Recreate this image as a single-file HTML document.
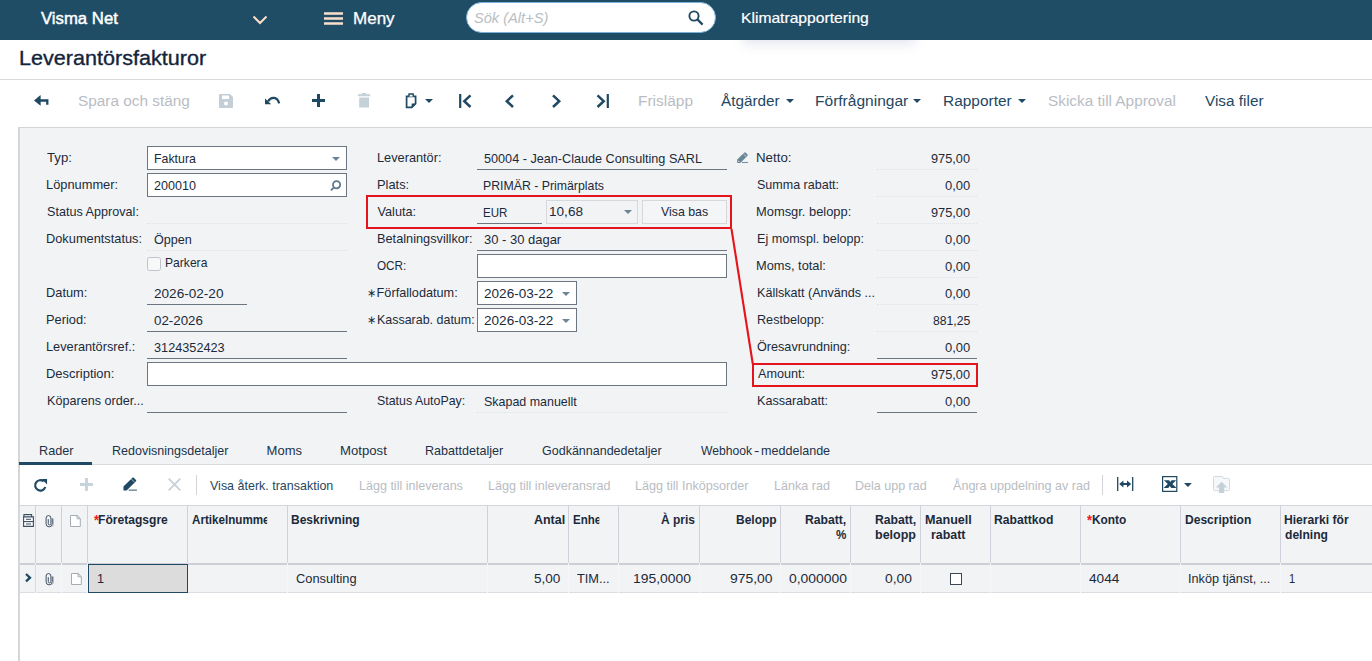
<!DOCTYPE html>
<html lang="sv"><head><meta charset="utf-8"><title>Leverantörsfakturor</title>
<style>
*{box-sizing:border-box;margin:0;padding:0}
html,body{width:1372px;height:661px;overflow:hidden;background:#fff}
body{font-family:"Liberation Sans",sans-serif;color:#1b2a3a;position:relative}
.x{position:absolute;white-space:nowrap;transform-origin:0 50%}
.a{position:absolute}
.inp{position:absolute;background:#fff;border:1px solid #6c7683}
.ul{position:absolute;height:1px;background:#6c7683}
.dl{position:absolute;height:0;border-top:1px dotted #e0e2e6}
.cb{position:absolute;top:506px;width:1px;height:57px;background:#cfd0da}
.rb{position:absolute;top:563px;width:1px;height:30px;background:#f6f7f9}
svg{position:absolute;overflow:visible}

</style></head><body>
<div class="a" style="left:745px;top:12px;width:168px;height:27px;box-shadow:0 3px 12px 2px rgba(70,90,150,.15)"></div>
<div class="a" style="left:0;top:0;width:1372px;height:40px;background:#204d66"></div>

<svg style="left:252px;top:15px" width="16" height="10" viewBox="0 0 16 10"><path d="M1.5 1.5 L8 8 L14.5 1.5" fill="none" stroke="#fadfcd" stroke-width="2"/></svg>
<svg style="left:324px;top:12px" width="19" height="13" viewBox="0 0 19 13"><path d="M0 1.5H19M0 6.5H19M0 11.5H19" stroke="#fadfcd" stroke-width="2.6"/></svg>
<div class="a" style="left:466px;top:2px;width:249.5px;height:30.5px;border-radius:16px;background:#fff;border:1px solid #7db0d8"></div>
<svg style="left:687px;top:9px" width="18" height="18" viewBox="0 0 18 18"><circle cx="7" cy="7" r="4.6" fill="none" stroke="#1f4a63" stroke-width="1.9"/><path d="M10.4 10.4 L15.6 15.6" stroke="#1f4a63" stroke-width="2.2"/></svg>
<div class="a" style="left:0;top:79px;width:1372px;height:1px;background:#d7d9dc"></div>
<!-- panel -->
<div class="a" style="left:18px;top:127px;width:1354px;height:534px;background:#f2f3f5;border-top:1px solid #d2d4d8"></div>
<div class="a" style="left:18px;top:127px;width:1px;height:534px;background:#d3d5d9"></div><div class="a" style="left:19px;top:128px;width:1px;height:533px;background:#d6d8dc"></div>
<!-- toolbar icons -->
<svg style="left:33.8px;top:95px" width="15" height="11" viewBox="0 0 15 11"><path d="M0 5.4 L6.6 0 V10.8 Z" fill="#1f4862"/><path d="M5.5 5.5 H13.3 V9.8" fill="none" stroke="#1f4862" stroke-width="2.3"/></svg>
<svg style="left:219px;top:94px" width="14" height="14" viewBox="0 0 14 14"><path d="M0 1 a1 1 0 0 1 1-1 H11 L14 3 V13 a1 1 0 0 1 -1 1 H1 a1 1 0 0 1 -1-1 Z" fill="#c3ced6"/><rect x="3" y="1.5" width="7" height="3.5" fill="#fff"/><circle cx="7" cy="9.5" r="2" fill="#fff"/></svg>
<svg style="left:265px;top:96px" width="16" height="9" viewBox="0 0 16 9"><path d="M0 2.4 V8.2 H6.2 Z" fill="#1f4862"/><path d="M3 5.4 C6 0.6 12.2 0.2 14.2 7.4" fill="none" stroke="#1f4862" stroke-width="2.2"/></svg>
<svg style="left:312px;top:94px" width="13" height="13" viewBox="0 0 13 13"><path d="M6.5 0V13M0 6.5H13" stroke="#1f4862" stroke-width="3"/></svg>
<svg style="left:358px;top:93px" width="12.2" height="15" viewBox="0 0 12.2 15"><path d="M3.8 0H8.4V1.3H12.2V3.2H0V1.3H3.8Z M1.2 4.5H11V14a0.6 0.6 0 0 1-.6.6H1.8A0.6 0.6 0 0 1 1.2 14Z" fill="#c5d1d9"/></svg>
<svg style="left:404.5px;top:92.6px" width="12" height="16" viewBox="0 0 12 16"><path d="M1.6 3.4 H10.6 V10.6 L6.8 14.4 H1.6 Z" fill="#fff" stroke="#1f4862" stroke-width="1.7"/><path d="M4 3.6 V1 H8.2 V3.6" fill="#fff" stroke="#1f4862" stroke-width="1.4"/><path d="M6.6 15 V10.4 H11.2 Z" fill="#1f4862"/></svg>
<svg style="left:425px;top:99px" width="8" height="4" viewBox="0 0 8 4"><path d="M0 0H8L4 4Z" fill="#1f4862"/></svg>
<svg style="left:459px;top:94px" width="13" height="14" viewBox="0 0 13 14"><path d="M1.2 0V14" stroke="#1f4862" stroke-width="2.2"/><path d="M11.5 1.4 L5.3 7.2 L11.5 13" fill="none" stroke="#1f4862" stroke-width="2.5"/></svg>
<svg style="left:504px;top:94px" width="11" height="14" viewBox="0 0 11 14"><path d="M9 1.4 L2.8 7.2 L9 13" fill="none" stroke="#1f4862" stroke-width="2.5"/></svg>
<svg style="left:551px;top:94px" width="11" height="14" viewBox="0 0 11 14"><path d="M2 1.4 L8.2 7.2 L2 13" fill="none" stroke="#1f4862" stroke-width="2.5"/></svg>
<svg style="left:596px;top:94px" width="13" height="14" viewBox="0 0 13 14"><path d="M11.8 0V14" stroke="#1f4862" stroke-width="2.2"/><path d="M1.5 1.4 L7.7 7.2 L1.5 13" fill="none" stroke="#1f4862" stroke-width="2.5"/></svg>
<svg style="left:786px;top:99px" width="8" height="4" viewBox="0 0 8 4"><path d="M0 0H8L4 4Z" fill="#1f4862"/></svg>
<svg style="left:913px;top:99px" width="8" height="4" viewBox="0 0 8 4"><path d="M0 0H8L4 4Z" fill="#1f4862"/></svg>
<svg style="left:1017.5px;top:99px" width="8" height="4" viewBox="0 0 8 4"><path d="M0 0H8L4 4Z" fill="#1f4862"/></svg>
<!-- form left -->
<div class="inp" style="left:147px;top:146px;width:200px;height:24px"></div>
<svg style="left:331.6px;top:157px" width="8" height="4" viewBox="0 0 8 4"><path d="M0 0H8L4 4Z" fill="#6b8597"/></svg>
<div class="inp" style="left:147px;top:173px;width:200px;height:24px"></div>
<svg style="left:330px;top:180px" width="12" height="12" viewBox="0 0 12 12"><circle cx="6.6" cy="4.7" r="3.6" fill="none" stroke="#5f7a8c" stroke-width="1.8"/><path d="M3.9 7.4 L0.9 10.4" stroke="#5f7a8c" stroke-width="1.9"/></svg>
<div class="dl" style="left:147px;top:223px;width:200px"></div>
<div class="dl" style="left:147px;top:250px;width:200px"></div>
<div class="a" style="left:147px;top:257px;width:14px;height:14px;background:#f8f8f9;border:1px solid #bfc3c9;border-radius:2.5px"></div>
<div class="ul" style="left:147px;top:304px;width:99.5px"></div>
<div class="ul" style="left:147px;top:331px;width:199.5px"></div>
<div class="ul" style="left:147px;top:358px;width:199.5px"></div>
<div class="inp" style="left:147px;top:362px;width:580px;height:24px"></div>
<div class="ul" style="left:147px;top:412px;width:199.5px"></div>
<!-- form middle -->
<div class="ul" style="left:477px;top:169px;width:250px"></div>
<svg style="left:736.9px;top:152px" width="11.3" height="11" viewBox="0 0 12.9 13"><path d="M0 13 V9 L8.2 0.8 Q9.2 -0.2 10.2 0.8 L12 2.6 Q13 3.6 12 4.6 L3.6 13 Z" fill="#6a8797"/><path d="M7.4 2.2 L10.6 5.4" stroke="#f2f3f5" stroke-width="0.8"/><path d="M1.3 10 V11.7 H3 Z" fill="#f2f3f5"/><path d="M5.6 12.4 H12.9" stroke="#6a8797" stroke-width="1.1"/></svg>
<div class="ul" style="left:477px;top:223px;width:64.5px"></div>
<div class="a" style="left:546px;top:200px;width:91.5px;height:24px;border:1px solid #d6d8dc;background:#f2f3f5"></div>
<svg style="left:623.5px;top:210px" width="8" height="4" viewBox="0 0 8 4"><path d="M0 0H8L4 4Z" fill="#6b8597"/></svg>
<div class="a" style="left:642px;top:200px;width:85px;height:24px;border:1px solid #d6d8dc;background:#f4f5f6"></div>
<div class="ul" style="left:477px;top:250px;width:250px"></div>
<div class="inp" style="left:477px;top:254px;width:250px;height:24px"></div>
<div class="inp" style="left:477px;top:281px;width:100px;height:24px"></div>
<svg style="left:562px;top:292px" width="8" height="4" viewBox="0 0 8 4"><path d="M0 0H8L4 4Z" fill="#6b8597"/></svg>
<div class="inp" style="left:477px;top:308px;width:100px;height:24px"></div>
<svg style="left:562px;top:319px" width="8" height="4" viewBox="0 0 8 4"><path d="M0 0H8L4 4Z" fill="#6b8597"/></svg>
<div class="dl" style="left:477px;top:412px;width:250px"></div>
<!-- form right -->
<div class="dl" style="left:877px;top:169px;width:100px"></div>
<div class="dl" style="left:877px;top:196px;width:100px"></div>
<div class="dl" style="left:877px;top:223px;width:100px"></div>
<div class="dl" style="left:877px;top:250px;width:100px"></div>
<div class="dl" style="left:877px;top:277px;width:100px"></div>
<div class="dl" style="left:877px;top:304px;width:100px"></div>
<div class="dl" style="left:877px;top:331px;width:100px"></div>
<div class="ul" style="left:877px;top:358px;width:100px"></div>
<div class="ul" style="left:877px;top:412px;width:100px"></div>
<!-- red annotation -->
<div class="a" style="left:366px;top:195px;width:365.6px;height:34.3px;border:2px solid #e5131b"></div>
<div class="a" style="left:752px;top:363px;width:226px;height:23.5px;border:2px solid #e5131b"></div>
<svg style="left:0;top:0" width="1372" height="661" viewBox="0 0 1372 661"><path d="M731.5 229 L752.8 364" stroke="#e5131b" stroke-width="2.1" fill="none"/></svg>
<!-- tabs -->
<div class="a" style="left:19px;top:464px;width:1353px;height:1px;background:#d9dbde"></div>
<div class="a" style="left:19px;top:462px;width:73px;height:3px;background:#1f4a63"></div>
<!-- grid toolbar -->
<div class="a" style="left:19.5px;top:465px;width:1353px;height:41px;background:#fff"></div>
<svg style="left:34.2px;top:479.2px" width="13.2" height="12.6" viewBox="0 0 13.2 12.6"><path d="M11.3 8 A5.2 5.2 0 1 1 9.7 2.4" fill="none" stroke="#1f4862" stroke-width="2.2"/><path d="M7.7 0 H13.1 V5.4 Z" fill="#1f4862"/></svg>
<svg style="left:80px;top:478px" width="13" height="13" viewBox="0 0 13 13"><path d="M6.5 0V13M0 6.5H13" stroke="#c7d3da" stroke-width="2.8"/></svg>
<svg style="left:122.8px;top:477.4px" width="14.4" height="13.6" viewBox="0 0 12.9 13"><path d="M0 13 V9.2 L8.6 0.6 Q9.2 0 9.8 0.6 L12 2.8 Q12.6 3.4 12 4 L3 13 Z" fill="#1f4862"/><path d="M7.6 2 L10.6 5" stroke="#fff" stroke-width="0.6"/><path d="M5 12.55 H12.9" stroke="#1f4862" stroke-width="0.9"/></svg>
<svg style="left:168px;top:478.2px" width="13" height="13" viewBox="0 0 13 13"><path d="M0.7 0.7L12.3 12.3M12.3 0.7L0.7 12.3" stroke="#c7d3da" stroke-width="1.9"/></svg>
<div class="a" style="left:196px;top:475px;width:1px;height:20px;background:#d3d5d9"></div>
<div class="a" style="left:1102px;top:475px;width:1px;height:20px;background:#d3d5d9"></div>
<svg style="left:1116.8px;top:477px" width="16.4" height="14" viewBox="0 0 16.4 14"><path d="M0.7 0V14M15.7 0V14" stroke="#1f4862" stroke-width="1.3"/><path d="M5 7H11.4" stroke="#1f4862" stroke-width="2"/><path d="M2.2 7 L6.4 3.6 V10.4Z M14.2 7 L10 3.6 V10.4Z" fill="#1f4862"/></svg>
<svg style="left:1161.9px;top:475.9px" width="15.4" height="16" viewBox="0 0 15.4 16"><rect x="0.6" y="0.6" width="14.2" height="14.8" fill="#fff" stroke="#1f4862" stroke-width="1.2"/><path d="M2 4.2H7.2L8.2 5.9 L9.6 4.2H14.2 L10.4 8 L14.6 12H9.2L7.9 10.1 L6.2 12H1.6L5.8 8Z" fill="#1f4862"/></svg>
<svg style="left:1183.6px;top:483.1px" width="7.8" height="4" viewBox="0 0 8 4"><path d="M0 0H8L4 4Z" fill="#1f4862"/></svg>
<svg style="left:1213px;top:476px" width="17" height="17.2" viewBox="0 0 17 17.2"><path d="M0.5 13.6V1.6a1.1 1.1 0 0 1 1.1-1.1H9.2a1.1 1.1 0 0 1 1.1 1.1V2.4H15.4a1.1 1.1 0 0 1 1.1 1.1V13.6a1.1 1.1 0 0 1 -1.1 1.1H1.6a1.1 1.1 0 0 1 -1.1-1.1Z" fill="#f5f7f8" stroke="#d2dae0" stroke-width="1"/><path d="M8.6 5.8 L14.3 11.6 H11.2 V17 H6 V11.6 H2.9 Z" fill="#c5d1d9"/></svg>
<!-- grid -->
<div class="a" style="left:19.5px;top:505px;width:1353px;height:1px;background:#d5d6dc"></div>
<div class="a" style="left:19.5px;top:563px;width:1353px;height:2px;background:#cdced8"></div>
<div class="a" style="left:19.5px;top:592px;width:1353px;height:69px;background:#fff;border-top:1px solid #dcdde2"></div>
<div class="cb" style="left:35px"></div><div class="cb" style="left:61px"></div><div class="cb" style="left:87px"></div><div class="cb" style="left:187px"></div><div class="cb" style="left:287px"></div><div class="cb" style="left:487px"></div><div class="cb" style="left:568px"></div><div class="cb" style="left:618px"></div><div class="cb" style="left:699px"></div><div class="cb" style="left:780px"></div><div class="cb" style="left:850px"></div><div class="cb" style="left:920px"></div><div class="cb" style="left:990px"></div><div class="cb" style="left:1080px"></div><div class="cb" style="left:1180px"></div><div class="cb" style="left:1280px"></div>
<div class="rb" style="left:35px"></div><div class="rb" style="left:61px"></div><div class="rb" style="left:87px"></div><div class="rb" style="left:187px"></div><div class="rb" style="left:287px"></div><div class="rb" style="left:487px"></div><div class="rb" style="left:568px"></div><div class="rb" style="left:618px"></div><div class="rb" style="left:699px"></div><div class="rb" style="left:780px"></div><div class="rb" style="left:850px"></div><div class="rb" style="left:920px"></div><div class="rb" style="left:990px"></div><div class="rb" style="left:1080px"></div><div class="rb" style="left:1180px"></div><div class="rb" style="left:1280px"></div>
<div class="a" style="left:35px;top:565px;width:1px;height:27px;background:#d9dbe0"></div>
<div class="a" style="left:88px;top:564px;width:100px;height:29px;background:#dcdcdc;border:1px solid #1f4a63"></div>
<!-- grid icons -->
<svg style="left:22.9px;top:513.9px" width="11" height="13" viewBox="0 0 11 13"><path d="M0.9 2.9 V0.6 H8.6 V2.9" fill="#fff" stroke="#3b4f63" stroke-width="1.1"/><path d="M0.6 2.9H10.4V12.4H0.6Z" fill="#fff" stroke="#3b4f63" stroke-width="1.1"/><path d="M0.6 7.6H10.4" stroke="#3b4f63" stroke-width="1.1"/><path d="M3 5.3H8M3 10H8" stroke="#3b4f63" stroke-width="1"/></svg>
<svg style="left:44.5px;top:514.7px" width="9.4" height="12.4" viewBox="0 0 9.4 12.4"><path d="M7.3 3.4 V8.8 a3.1 3.1 0 0 1 -6.2 0 V3 a2.4 2.4 0 0 1 4.8 0 V8.6 a1.3 1.3 0 0 1 -2.6 0 V4.2" fill="none" stroke="#35485c" stroke-width="0.95"/><path d="M8.4 3.6 V8.9 a4.1 4.1 0 0 1 -1 2.6" fill="none" stroke="#9aa5b0" stroke-width="0.8"/></svg>
<svg style="left:70.2px;top:514.8px" width="10.8" height="12" viewBox="0 0 10.8 12"><path d="M0.5 0.5H7L10.3 3.8V11.5H0.5Z" fill="#fff" stroke="#a4abb4" stroke-width="1"/><path d="M7 0.5V3.8H10.3Z" fill="#eceef0" stroke="#a4abb4" stroke-width="0.9"/></svg>
<svg style="left:24.6px;top:572.8px" width="7" height="9.4" viewBox="0 0 7 9.4"><path d="M1 1 L5 4.7 L1 8.4" fill="none" stroke="#1f4862" stroke-width="2.3"/></svg>
<svg style="left:45.4px;top:572.9px" width="9.4" height="12.4" viewBox="0 0 9.4 12.4"><path d="M7.3 3.4 V8.8 a3.1 3.1 0 0 1 -6.2 0 V3 a2.4 2.4 0 0 1 4.8 0 V8.6 a1.3 1.3 0 0 1 -2.6 0 V4.2" fill="none" stroke="#35485c" stroke-width="0.95"/><path d="M8.4 3.6 V8.9 a4.1 4.1 0 0 1 -1 2.6" fill="none" stroke="#9aa5b0" stroke-width="0.8"/></svg>
<svg style="left:71px;top:573px" width="10.8" height="12" viewBox="0 0 10.8 12"><path d="M0.5 0.5H7L10.3 3.8V11.5H0.5Z" fill="#fff" stroke="#a4abb4" stroke-width="1"/><path d="M7 0.5V3.8H10.3Z" fill="#eceef0" stroke="#a4abb4" stroke-width="0.9"/></svg>
<div class="a" style="left:950px;top:573px;width:12px;height:12px;background:#fff;border:1px solid #3d4754"></div>

<!-- text -->
<div class="x" style="left:40.50px;top:10px;font-size:16.3px;line-height:16.3px;color:#fff;transform:scaleX(1.0275);-webkit-text-stroke:0.45px #fff">Visma Net</div>
<div class="x" style="left:353.47px;top:11px;font-size:15.6px;line-height:15.6px;color:#fff;transform:scaleX(1.0913);-webkit-text-stroke:0.25px #fff">Meny</div>
<div class="x" style="left:473.77px;top:11px;font-size:14.0px;line-height:14.0px;color:#b9bec4;transform:scaleX(1.0435);font-style:italic">Sök (Alt+S)</div>
<div class="x" style="left:741.28px;top:10px;font-size:15.0px;line-height:15.0px;color:#fff;transform:scaleX(1.0428);-webkit-text-stroke:0.2px #fff">Klimatrapportering</div>
<div class="x" style="left:18.81px;top:48px;font-size:20.8px;line-height:20.8px;color:#13243a;transform:scaleX(1.0374);-webkit-text-stroke:0.35px #13243a">Leverantörsfakturor</div>
<div class="x" style="left:77.52px;top:93px;font-size:15.3px;line-height:15.3px;color:#b9bdc3;transform:scaleX(1.0037)">Spara och stäng</div>
<div class="x" style="left:638.09px;top:93px;font-size:15.3px;line-height:15.3px;color:#b9bdc3;transform:scaleX(1.0114)">Frisläpp</div>
<div class="x" style="left:721.00px;top:93px;font-size:15.3px;line-height:15.3px;color:#1f4761">Åtgärder</div>
<div class="x" style="left:814.79px;top:93px;font-size:15.3px;line-height:15.3px;color:#1f4761;transform:scaleX(1.0157)">Förfrågningar</div>
<div class="x" style="left:942.99px;top:93px;font-size:15.3px;line-height:15.3px;color:#1f4761;transform:scaleX(1.0110)">Rapporter</div>
<div class="x" style="left:1047.82px;top:93px;font-size:15.3px;line-height:15.3px;color:#b9bdc3;transform:scaleX(1.0031)">Skicka till Approval</div>
<div class="x" style="left:1204.50px;top:93px;font-size:15.3px;line-height:15.3px;color:#1f4761;transform:scaleX(1.0031)">Visa filer</div>
<div class="x" style="left:47.24px;top:152px;font-size:12.7px;line-height:12.7px;color:#1b2a3a;transform:scaleX(1.0389)">Typ:</div>
<div class="x" style="left:46.49px;top:179px;font-size:12.7px;line-height:12.7px;color:#1b2a3a;transform:scaleX(1.0121)">Löpnummer:</div>
<div class="x" style="left:46.95px;top:206px;font-size:12.7px;line-height:12.7px;color:#1b2a3a;transform:scaleX(0.9945)">Status Approval:</div>
<div class="x" style="left:46.49px;top:233px;font-size:12.7px;line-height:12.7px;color:#1b2a3a;transform:scaleX(1.0090)">Dokumentstatus:</div>
<div class="x" style="left:46.49px;top:287px;font-size:12.7px;line-height:12.7px;color:#1b2a3a;transform:scaleX(1.0115)">Datum:</div>
<div class="x" style="left:46.49px;top:314px;font-size:12.7px;line-height:12.7px;color:#1b2a3a;transform:scaleX(1.0102)">Period:</div>
<div class="x" style="left:46.49px;top:341px;font-size:12.7px;line-height:12.7px;color:#1b2a3a;transform:scaleX(1.0050)">Leverantörsref.:</div>
<div class="x" style="left:46.48px;top:368px;font-size:12.7px;line-height:12.7px;color:#1b2a3a;transform:scaleX(1.0204)">Description:</div>
<div class="x" style="left:46.51px;top:395px;font-size:12.7px;line-height:12.7px;color:#1b2a3a;transform:scaleX(0.9942)">Köparens order...</div>
<div class="x" style="left:153.53px;top:152px;font-size:13.0px;line-height:13.0px;color:#1b2a3a;transform:scaleX(0.9504)">Faktura</div>
<div class="x" style="left:153.91px;top:179px;font-size:13.0px;line-height:13.0px;color:#1b2a3a;transform:scaleX(0.9659)">200010</div>
<div class="x" style="left:153.91px;top:233px;font-size:13.0px;line-height:13.0px;color:#1b2a3a;transform:scaleX(0.9684)">Öppen</div>
<div class="x" style="left:164.55px;top:256px;font-size:13.0px;line-height:13.0px;color:#1b2a3a;transform:scaleX(0.9308)">Parkera</div>
<div class="x" style="left:153.86px;top:287px;font-size:13.0px;line-height:13.0px;color:#1b2a3a;transform:scaleX(1.0448)">2026-02-20</div>
<div class="x" style="left:154.08px;top:314px;font-size:13.0px;line-height:13.0px;color:#1b2a3a;transform:scaleX(1.0262)">02-2026</div>
<div class="x" style="left:154.10px;top:341px;font-size:13.0px;line-height:13.0px;color:#1b2a3a;transform:scaleX(0.9773)">3124352423</div>
<div class="x" style="left:376.60px;top:152px;font-size:12.7px;line-height:12.7px;color:#1b2a3a;transform:scaleX(1.0046)">Leverantör:</div>
<div class="x" style="left:376.59px;top:179px;font-size:12.7px;line-height:12.7px;color:#1b2a3a;transform:scaleX(1.0124)">Plats:</div>
<div class="x" style="left:377.55px;top:206px;font-size:12.7px;line-height:12.7px;color:#1b2a3a">Valuta:</div>
<div class="x" style="left:376.60px;top:233px;font-size:12.7px;line-height:12.7px;color:#1b2a3a;transform:scaleX(1.0047)">Betalningsvillkor:</div>
<div class="x" style="left:377.05px;top:260px;font-size:12.7px;line-height:12.7px;color:#1b2a3a;transform:scaleX(0.9227)">OCR:</div>
<div class="x" style="left:376.60px;top:287px;font-size:12.7px;line-height:12.7px;color:#1b2a3a">Förfallodatum:</div>
<div class="x" style="left:376.62px;top:314px;font-size:12.7px;line-height:12.7px;color:#1b2a3a;transform:scaleX(0.9815)">Kassarab. datum:</div>
<div class="x" style="left:377.06px;top:395px;font-size:12.7px;line-height:12.7px;color:#1b2a3a;transform:scaleX(0.9777)">Status AutoPay:</div>
<div class="x" style="left:483.90px;top:152px;font-size:13.0px;line-height:13.0px;color:#1b2a3a;transform:scaleX(0.9727)">50004 - Jean-Claude Consulting SARL</div>
<div class="x" style="left:483.34px;top:179px;font-size:13.0px;line-height:13.0px;color:#1b2a3a;transform:scaleX(0.9460)">PRIMÄR - Primärplats</div>
<div class="x" style="left:483.40px;top:206px;font-size:13.0px;line-height:13.0px;color:#1b2a3a;transform:scaleX(0.8891)">EUR</div>
<div class="x" style="left:549.15px;top:205px;font-size:13.0px;line-height:13.0px;color:#1b2a3a;transform:scaleX(1.0451)">10,68</div>
<div class="x" style="left:661.30px;top:205px;font-size:13.0px;line-height:13.0px;color:#1b2a3a;transform:scaleX(0.9488)">Visa bas</div>
<div class="x" style="left:483.89px;top:233px;font-size:13.0px;line-height:13.0px;color:#1b2a3a;transform:scaleX(0.9979)">30 - 30 dagar</div>
<div class="x" style="left:483.66px;top:287px;font-size:13.0px;line-height:13.0px;color:#1b2a3a;transform:scaleX(1.0434)">2026-03-22</div>
<div class="x" style="left:483.66px;top:314px;font-size:13.0px;line-height:13.0px;color:#1b2a3a;transform:scaleX(1.0434)">2026-03-22</div>
<div class="x" style="left:483.91px;top:395px;font-size:13.0px;line-height:13.0px;color:#1b2a3a;transform:scaleX(0.9577)">Skapad manuellt</div>
<div class="x" style="left:367.32px;top:287px;font-size:12px;line-height:12px;color:#1b2a3a;transform:scaleX(0.9220)">∗</div>
<div class="x" style="left:367.32px;top:314px;font-size:12px;line-height:12px;color:#1b2a3a;transform:scaleX(0.9220)">∗</div>
<div class="x" style="left:756.45px;top:152px;font-size:12.7px;line-height:12.7px;color:#1b2a3a;transform:scaleX(1.0487)">Netto:</div>
<div class="x" style="left:756.96px;top:179px;font-size:12.7px;line-height:12.7px;color:#1b2a3a;transform:scaleX(0.9864)">Summa rabatt:</div>
<div class="x" style="left:756.48px;top:206px;font-size:12.7px;line-height:12.7px;color:#1b2a3a;transform:scaleX(1.0157)">Momsgr. belopp:</div>
<div class="x" style="left:756.51px;top:233px;font-size:12.7px;line-height:12.7px;color:#1b2a3a;transform:scaleX(0.9908)">Ej momspl. belopp:</div>
<div class="x" style="left:756.49px;top:260px;font-size:12.7px;line-height:12.7px;color:#1b2a3a;transform:scaleX(1.0114)">Moms, total:</div>
<div class="x" style="left:756.51px;top:287px;font-size:12.7px;line-height:12.7px;color:#1b2a3a;transform:scaleX(0.9909)">Källskatt (Används ...</div>
<div class="x" style="left:756.51px;top:314px;font-size:12.7px;line-height:12.7px;color:#1b2a3a;transform:scaleX(0.9947)">Restbelopp:</div>
<div class="x" style="left:756.90px;top:341px;font-size:12.7px;line-height:12.7px;color:#1b2a3a;transform:scaleX(0.9950)">Öresavrundning:</div>
<div class="x" style="left:757.50px;top:368px;font-size:12.7px;line-height:12.7px;color:#1b2a3a;transform:scaleX(0.9964)">Amount:</div>
<div class="x" style="left:756.50px;top:395px;font-size:12.7px;line-height:12.7px;color:#1b2a3a;transform:scaleX(0.9961)">Kassarabatt:</div>
<div class="x" style="left:931.00px;top:152px;font-size:13.0px;line-height:13.0px;color:#1b2a3a;transform:scaleX(0.9812)">975,00</div>
<div class="x" style="left:944.79px;top:179px;font-size:13.0px;line-height:13.0px;color:#1b2a3a;transform:scaleX(0.9971)">0,00</div>
<div class="x" style="left:931.00px;top:206px;font-size:13.0px;line-height:13.0px;color:#1b2a3a;transform:scaleX(0.9812)">975,00</div>
<div class="x" style="left:944.79px;top:233px;font-size:13.0px;line-height:13.0px;color:#1b2a3a;transform:scaleX(0.9971)">0,00</div>
<div class="x" style="left:944.79px;top:260px;font-size:13.0px;line-height:13.0px;color:#1b2a3a;transform:scaleX(0.9971)">0,00</div>
<div class="x" style="left:944.79px;top:287px;font-size:13.0px;line-height:13.0px;color:#1b2a3a;transform:scaleX(0.9971)">0,00</div>
<div class="x" style="left:932.92px;top:314px;font-size:13.0px;line-height:13.0px;color:#1b2a3a;transform:scaleX(0.9375)">881,25</div>
<div class="x" style="left:944.79px;top:341px;font-size:13.0px;line-height:13.0px;color:#1b2a3a;transform:scaleX(0.9971)">0,00</div>
<div class="x" style="left:931.00px;top:368px;font-size:13.0px;line-height:13.0px;color:#1b2a3a;transform:scaleX(0.9812)">975,00</div>
<div class="x" style="left:944.79px;top:395px;font-size:13.0px;line-height:13.0px;color:#1b2a3a;transform:scaleX(0.9971)">0,00</div>
<div class="x" style="left:39.01px;top:444px;font-size:13.0px;line-height:13.0px;color:#1c3247;transform:scaleX(0.9759)">Rader</div>
<div class="x" style="left:111.62px;top:444px;font-size:13.0px;line-height:13.0px;color:#1c3247;transform:scaleX(0.9640)">Redovisningsdetaljer</div>
<div class="x" style="left:266.59px;top:444px;font-size:13.0px;line-height:13.0px;color:#1c3247">Moms</div>
<div class="x" style="left:339.87px;top:444px;font-size:13.0px;line-height:13.0px;color:#1c3247;transform:scaleX(1.0117)">Motpost</div>
<div class="x" style="left:424.82px;top:444px;font-size:13.0px;line-height:13.0px;color:#1c3247;transform:scaleX(0.9654)">Rabattdetaljer</div>
<div class="x" style="left:541.71px;top:444px;font-size:13.0px;line-height:13.0px;color:#1c3247;transform:scaleX(0.9616)">Godkännandedetaljer</div>
<div class="x" style="left:700.70px;top:444px;font-size:13.0px;line-height:13.0px;color:#1c3247;transform:scaleX(0.9346)">Webhook</div>
<div class="x" style="left:754.39px;top:444px;font-size:13.0px;line-height:13.0px;color:#1c3247;transform:scaleX(1.2452)">-</div>
<div class="x" style="left:761.22px;top:444px;font-size:13.0px;line-height:13.0px;color:#1c3247;transform:scaleX(0.9656)">meddelande</div>
<div class="x" style="left:210.40px;top:479px;font-size:13.0px;line-height:13.0px;color:#1f4761;transform:scaleX(0.9604)">Visa återk. transaktion</div>
<div class="x" style="left:359.32px;top:479px;font-size:13.0px;line-height:13.0px;color:#b9bdc3;transform:scaleX(0.9647)">Lägg till inleverans</div>
<div class="x" style="left:488.02px;top:479px;font-size:13.0px;line-height:13.0px;color:#b9bdc3;transform:scaleX(0.9678)">Lägg till inleveransrad</div>
<div class="x" style="left:635.42px;top:479px;font-size:13.0px;line-height:13.0px;color:#b9bdc3;transform:scaleX(0.9682)">Lägg till Inköpsorder</div>
<div class="x" style="left:774.32px;top:479px;font-size:13.0px;line-height:13.0px;color:#b9bdc3;transform:scaleX(0.9683)">Länka rad</div>
<div class="x" style="left:855.32px;top:479px;font-size:13.0px;line-height:13.0px;color:#b9bdc3;transform:scaleX(0.9629)">Dela upp rad</div>
<div class="x" style="left:952.80px;top:479px;font-size:13.0px;line-height:13.0px;color:#b9bdc3;transform:scaleX(0.9671)">Ångra uppdelning av rad</div>
<div class="x" style="left:93.60px;top:512px;font-size:15px;line-height:15px;color:#f4141c;transform:scaleX(0.8533);font-weight:700">*</div>
<div class="x" style="left:98.49px;top:514px;font-size:12.7px;line-height:12.7px;color:#1b2a3a;transform:scaleX(0.9524);font-weight:700">Företagsgre</div>
<div class="x" style="left:191.97px;top:514px;font-size:12.7px;line-height:12.7px;color:#1b2a3a;transform:scaleX(0.9171);font-weight:700;width:82.4px;overflow:hidden">Artikelnummer</div>
<div class="x" style="left:291.49px;top:514px;font-size:12.7px;line-height:12.7px;color:#1b2a3a;transform:scaleX(0.9460);font-weight:700">Beskrivning</div>
<div class="x" style="left:533.91px;top:514px;font-size:12.7px;line-height:12.7px;color:#1b2a3a;transform:scaleX(0.9813);font-weight:700">Antal</div>
<div class="x" style="left:572.57px;top:514px;font-size:12.7px;line-height:12.7px;color:#1b2a3a;transform:scaleX(0.9083);font-weight:700;width:29.0px;overflow:hidden">Enhet</div>
<div class="x" style="left:661.22px;top:514px;font-size:12.7px;line-height:12.7px;color:#1b2a3a;transform:scaleX(0.9438);font-weight:700">À pris</div>
<div class="x" style="left:735.54px;top:514px;font-size:12.7px;line-height:12.7px;color:#1b2a3a;transform:scaleX(0.9442);font-weight:700">Belopp</div>
<div class="x" style="left:805.23px;top:514px;font-size:12.7px;line-height:12.7px;color:#1b2a3a;transform:scaleX(0.9586);font-weight:700">Rabatt,</div>
<div class="x" style="left:835.63px;top:529px;font-size:12.7px;line-height:12.7px;color:#1b2a3a;transform:scaleX(0.9159);font-weight:700">%</div>
<div class="x" style="left:875.23px;top:514px;font-size:12.7px;line-height:12.7px;color:#1b2a3a;transform:scaleX(0.9586);font-weight:700">Rabatt,</div>
<div class="x" style="left:875.21px;top:529px;font-size:12.7px;line-height:12.7px;color:#1b2a3a;transform:scaleX(0.9848);font-weight:700">belopp</div>
<div class="x" style="left:924.71px;top:514px;font-size:12.7px;line-height:12.7px;color:#1b2a3a;transform:scaleX(0.9912);font-weight:700">Manuell</div>
<div class="x" style="left:930.52px;top:529px;font-size:12.7px;line-height:12.7px;color:#1b2a3a;transform:scaleX(0.9780);font-weight:700">rabatt</div>
<div class="x" style="left:994.33px;top:514px;font-size:12.7px;line-height:12.7px;color:#1b2a3a;transform:scaleX(0.9573);font-weight:700">Rabattkod</div>
<div class="x" style="left:1086.60px;top:512px;font-size:15px;line-height:15px;color:#f4141c;transform:scaleX(0.8533);font-weight:700">*</div>
<div class="x" style="left:1091.65px;top:514px;font-size:12.7px;line-height:12.7px;color:#1b2a3a;transform:scaleX(0.9374);font-weight:700">Konto</div>
<div class="x" style="left:1184.54px;top:514px;font-size:12.7px;line-height:12.7px;color:#1b2a3a;transform:scaleX(0.9502);font-weight:700">Description</div>
<div class="x" style="left:1284.44px;top:514px;font-size:12.7px;line-height:12.7px;color:#1b2a3a;transform:scaleX(0.9555);font-weight:700">Hierarki för</div>
<div class="x" style="left:1284.72px;top:529px;font-size:12.7px;line-height:12.7px;color:#1b2a3a;transform:scaleX(0.9534);font-weight:700">delning</div>
<div class="x" style="left:97.21px;top:572px;font-size:13.0px;line-height:13.0px;color:#1b2a3a;transform:scaleX(0.9761)">1</div>
<div class="x" style="left:295.65px;top:572px;font-size:13.0px;line-height:13.0px;color:#1b2a3a;transform:scaleX(0.9861)">Consulting</div>
<div class="x" style="left:533.78px;top:572px;font-size:13.0px;line-height:13.0px;color:#1b2a3a;transform:scaleX(1.0418)">5,00</div>
<div class="x" style="left:577.10px;top:572px;font-size:13.0px;line-height:13.0px;color:#1b2a3a;transform:scaleX(0.9830)">TIM...</div>
<div class="x" style="left:633.33px;top:572px;font-size:13.0px;line-height:13.0px;color:#1b2a3a;transform:scaleX(1.0700)">195,0000</div>
<div class="x" style="left:729.75px;top:572px;font-size:13.0px;line-height:13.0px;color:#1b2a3a;transform:scaleX(1.0714)">975,00</div>
<div class="x" style="left:788.77px;top:572px;font-size:13.0px;line-height:13.0px;color:#1b2a3a;transform:scaleX(1.0693)">0,000000</div>
<div class="x" style="left:885.37px;top:572px;font-size:13.0px;line-height:13.0px;color:#1b2a3a;transform:scaleX(1.0663)">0,00</div>
<div class="x" style="left:1089.29px;top:572px;font-size:13.0px;line-height:13.0px;color:#1b2a3a;transform:scaleX(1.0531)">4044</div>
<div class="x" style="left:1188.01px;top:572px;font-size:13.0px;line-height:13.0px;color:#1b2a3a;transform:scaleX(0.9738)">Inköp tjänst, ...</div>
<div class="x" style="left:1288.91px;top:572px;font-size:13.0px;line-height:13.0px;color:#1b2a3a;transform:scaleX(0.8488)">1</div>
</body></html>
